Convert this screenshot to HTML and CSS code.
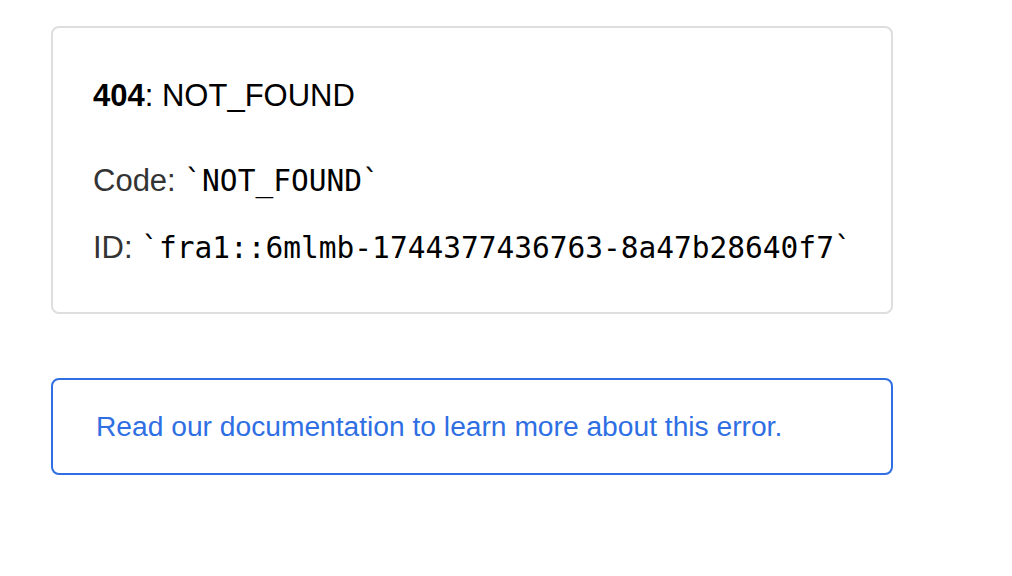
FILE: index.html
```html
<!DOCTYPE html>
<html>
<head>
<meta charset="utf-8">
<link rel="stylesheet" href="styles.css">
</head>
<body>
<main class="container">
  <p class="devinfo">
    <span class="error-code"><strong>404</strong>: NOT_FOUND</span>
    <span class="line">Code: <code>`NOT_FOUND`</code></span>
    <span class="line">ID: <code>`fra1::6mlmb-1744377436763-8a47b28640f7`</code></span>
  </p>
  <a class="note" href="#">Read our documentation to learn more about this error.</a>
</main>
</body>
</html>
```

FILE: styles.css
```css
html, body {
  margin: 0;
  padding: 0;
  background: #fff;
}
body {
  font-family: "Liberation Sans", Arial, sans-serif;
  color: #000;
}
.container {
  width: 842px;
  padding: 26px 0 0 51px;
  display: flex;
  flex-direction: column;
}
.devinfo {
  margin: 0;
  border: 2px solid #dedede;
  border-radius: 8px;
  padding: 48px 40px 44px 40px;
  display: flex;
  flex-direction: column;
  gap: 27px;
}
.error-code {
  font-size: 31px;
  line-height: 40px;
  color: #000;
  margin-bottom: 18px;
  white-space: nowrap;
}
.error-code strong {
  font-weight: bold;
}
.line {
  font-size: 31px;
  line-height: 40px;
  color: #333;
  white-space: nowrap;
}
code {
  font-family: "DejaVu Sans Mono", Menlo, monospace;
  font-size: 29.5px;
  color: #000;
}
.note {
  margin-top: 64px;
  display: block;
  border: 2px solid #2f6fe3;
  border-radius: 8px;
  padding: 28px 43px 29px;
  font-size: 28.2px;
  line-height: 36px;
  color: #2f6fe3;
  text-decoration: none;
}
```
